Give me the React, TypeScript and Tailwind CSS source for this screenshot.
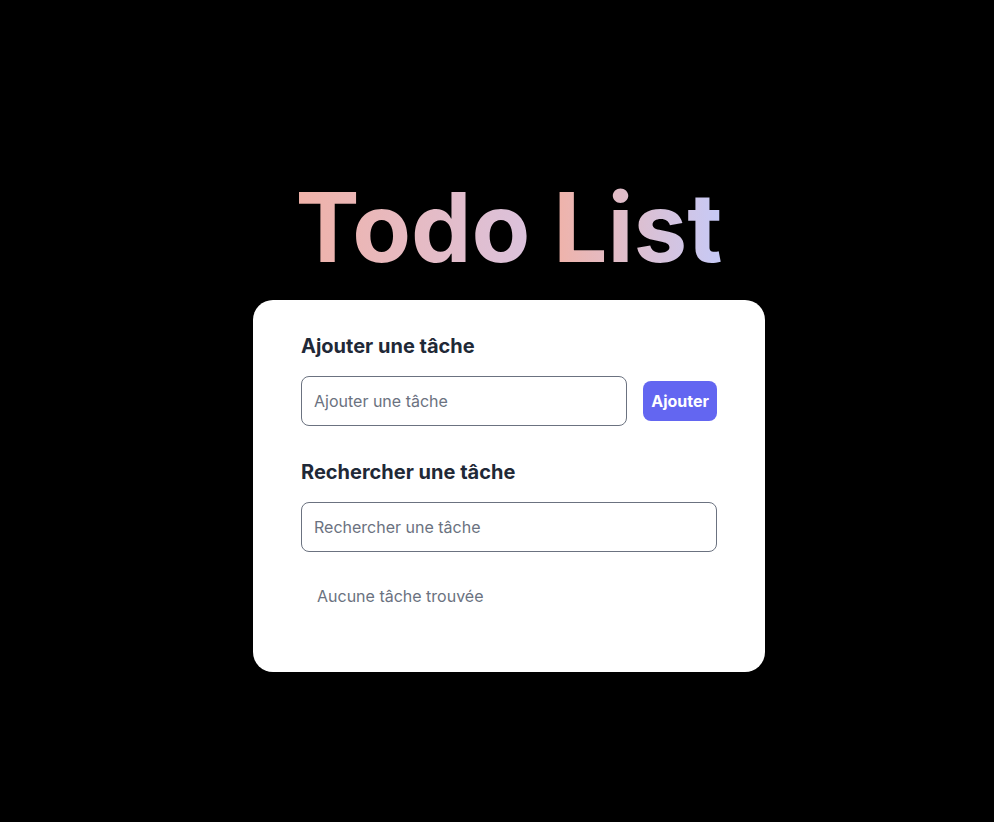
import React from "react";

export default function App() {
  return (
    <div
      className="min-h-screen w-full bg-black flex flex-col items-center pt-[179px] pl-6"
      style={{ fontFamily: "Inter, 'Noto Sans', sans-serif" }}
    >
      <h1 className="text-8xl font-bold leading-none mb-[25px] whitespace-nowrap">
        <span className="bg-gradient-to-r from-[#f0b2a8] to-[#dbc2dc] bg-clip-text text-transparent">
          Todo
        </span>{" "}
        <span className="bg-gradient-to-r from-[#f0b2a8] to-[#c6caf7] bg-clip-text text-transparent">
          List
        </span>
      </h1>
      <div className="w-[512px] bg-white rounded-[20px] px-12 pt-8 pb-16">
        <h2 className="text-xl font-bold text-[#1f2937] leading-7 mb-4">Ajouter une tâche</h2>
        <div className="flex items-center gap-4">
          <input
            className="flex-1 h-[50px] border border-[#6b7280] rounded-lg px-3 text-base text-gray-800 placeholder:text-[#6b7280] outline-none"
            placeholder="Ajouter une tâche"
          />
          <button className="h-10 px-2 bg-[#6366f1] text-white font-bold text-base rounded-lg">
            Ajouter
          </button>
        </div>
        <h2 className="text-xl font-bold text-[#1f2937] leading-7 mt-8 mb-4">Rechercher une tâche</h2>
        <input
          className="w-full h-[50px] border border-[#6b7280] rounded-lg px-3 text-base text-gray-800 placeholder:text-[#6b7280] outline-none"
          placeholder="Rechercher une tâche"
        />
        <p className="mt-8 px-4 text-base leading-6 text-[#6b7280]">Aucune tâche trouvée</p>
      </div>
    </div>
  );
}
